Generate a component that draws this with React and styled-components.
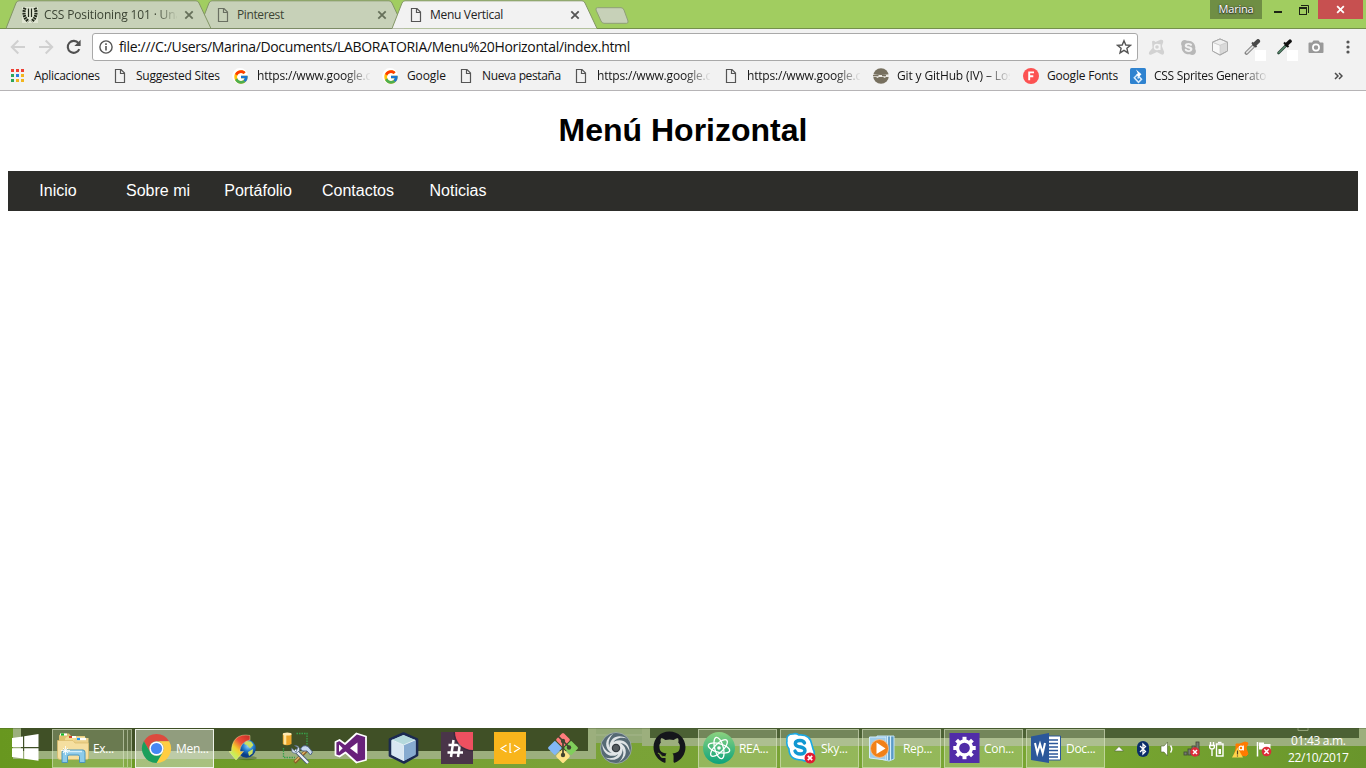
import React from 'react';
import styled, { createGlobalStyle, css } from 'styled-components';
import { FcGoogle } from 'react-icons/fc';
import { FaGithub, FaSkype } from 'react-icons/fa';

const uiFont = '"Open Sans", "Noto Sans", sans-serif';

const GlobalStyle = createGlobalStyle`
  *, *::before, *::after { box-sizing: border-box; }
  body { margin: 0; background: #fff; overflow: hidden; font-family: ${uiFont}; }
  svg { display: block; flex: none; }
`;

const Screen = styled.div`
  width: 1366px;
  height: 768px;
  display: flex;
  flex-direction: column;
  overflow: hidden;
`;

/* ---------- window title bar ---------- */

const TitleBar = styled.header`
  height: 29px;
  display: flex;
  align-items: flex-start;
  padding-left: 6px;
  background: #a1cd60;
  box-shadow: inset 0 -1px #74904b;
`;

const TabShell = styled.div`
  position: relative;
  z-index: ${p => (p.$active ? 3 : p.$layer)};
  width: 205px;
  height: 29px;
  flex: none;
  margin-right: -12px;
  padding: 1px 17px 0 16px;
  display: flex;
  align-items: center;
`;

const TabShape = styled.svg`
  position: absolute;
  inset: 0;
  z-index: -1;
`;

const TabTitle = styled.span`
  width: 133px;
  margin: 0 7px 0 6px;
  font-size: 12px;
  letter-spacing: ${p => p.$spacing || 0}px;
  line-height: 16px;
  white-space: nowrap;
  overflow: hidden;
  color: ${p => (p.$active ? '#222' : '#3c4434')};
  ${p => p.$fade && css`mask-image: linear-gradient(90deg, #000 112px, transparent 134px);`}
`;

const NewTab = styled.svg`
  margin: 7px 0 0 10px;
`;

const WindowControls = styled.div`
  display: flex;
  height: 19px;
  margin-left: auto;
  margin-right: 3px;
  align-items: stretch;
`;

const UserBadge = styled.div`
  width: 52px;
  background: #6f8e44;
  color: #fff;
  font-size: 11px;
  line-height: 18px;
  letter-spacing: -0.2px;
  text-align: center;
  text-shadow: 0 0 2px #222, 0 1px 1px #333;
`;

const CaptionButton = styled.div`
  width: ${p => p.$w}px;
  padding-right: ${p => p.$shift || 0}px;
  display: flex;
  align-items: center;
  justify-content: center;
  background: ${p => p.$bg || 'transparent'};
`;

/* ---------- toolbar ---------- */

const Toolbar = styled.div`
  height: 34px;
  display: flex;
  align-items: center;
  padding: 2px 0 0 10px;
  background: #f2f2f2;
`;

const NavButtons = styled.div`
  display: flex;
  gap: 12px;
  width: 82px;
`;

const AddressBar = styled.div`
  width: 1046px;
  flex: none;
  height: 28px;
  display: flex;
  align-items: center;
  border: 1px solid #a9a9a9;
  border-radius: 3px;
  background: #fff;
  padding: 0 5px 0 6px;
`;

const Url = styled.span`
  flex: 1;
  margin-left: 6px;
  font-size: 14px;
  line-height: 20px;
  letter-spacing: -0.345px;
  white-space: nowrap;
  color: #111;
`;

const Extensions = styled.div`
  display: flex;
  flex: none;
  padding-left: 2px;
`;

const ExtensionSlot = styled.div`
  width: 32px;
  height: 28px;
  display: flex;
  align-items: center;
  justify-content: center;
`;

/* ---------- bookmarks ---------- */

const BookmarksBar = styled.div`
  height: 28px;
  display: flex;
  padding-left: 10px;
  padding-bottom: 1px;
  background: #f2f2f2;
  border-bottom: 1px solid #b6b4b6;
`;

const BookmarkItem = styled.div`
  width: ${p => p.$w}px;
  flex: none;
  display: flex;
  align-items: center;
  gap: 8px;
`;

const BookmarkLabel = styled.span`
  width: ${p => (p.$fade ? '113px' : 'auto')};
  font-size: 12px;
  line-height: 16px;
  letter-spacing: ${p => p.$spacing || 0}px;
  white-space: nowrap;
  overflow: hidden;
  color: #151515;
  ${p => p.$fade && css`mask-image: linear-gradient(90deg, #000 88px, transparent 114px);`}
`;

const IconBox = styled.span`
  width: 16px;
  height: 16px;
  flex: none;
  display: flex;
  align-items: center;
  justify-content: center;
`;

const Overflow = styled.span`
  margin-left: auto;
  width: 32px;
  display: flex;
  align-items: center;
`;

/* ---------- page ---------- */

const Page = styled.main`
  flex: 1;
  padding: 0 8px;
  background: #fff;
  font-family: "Liberation Sans", Arial, sans-serif;
`;

const Heading = styled.h1`
  margin: 0;
  padding: 21px 0 22px;
  font-size: 32px;
  line-height: 37px;
  text-align: center;
  color: #000;
`;

const Menu = styled.nav`
  height: 40px;
  display: flex;
  background: #2d2d2a;
`;

const MenuLink = styled.a`
  width: 100px;
  font-size: 16px;
  line-height: 40px;
  text-align: center;
  color: #fff;
`;

/* ---------- taskbar ---------- */

const Taskbar = styled.footer`
  position: relative;
  z-index: 0;
  height: 40px;
  display: flex;
  align-items: stretch;
`;

const Wallpaper = styled.svg`
  position: absolute;
  inset: 0;
  z-index: -1;
`;

const StartButton = styled.div`
  width: 52px;
  padding: 6px 0 0 12px;
`;

const TaskButton = styled.div`
  width: ${p => p.$w || 79}px;
  height: 39px;
  margin: 1px ${p => p.$gap ?? 3}px 0 ${p => p.$lead || 0}px;
  padding-left: ${p => (p.$active ? 5 : 4)}px;
  padding-bottom: 1px;
  flex: none;
  display: flex;
  align-items: center;
  gap: 4px;
  border: 1px solid ${p => (p.$active ? '#eef2e8' : 'rgba(225,235,205,.55)')};
  background: ${p => (p.$active ? 'rgba(220,228,208,.52)' : 'rgba(220,235,195,.27)')};
`;

const StackEdge = styled.div`
  width: 4px;
  height: 39px;
  margin-top: 1px;
  border: 1px solid rgba(225,235,205,.5);
  border-left: 0;
  background: rgba(220,235,195,.22);
`;

const TaskLabel = styled.span`
  font-size: 12px;
  letter-spacing: -0.3px;
  color: #fff;
  white-space: nowrap;
`;

const Launchers = styled.div`
  display: flex;
  width: 480px;
  flex: none;
  margin-left: 4px;
`;

const Launcher = styled.div`
  width: 53.1px;
  flex: none;
  padding-bottom: 1px;
  display: flex;
  align-items: center;
  justify-content: center;
`;

const Tray = styled.div`
  display: flex;
  align-items: center;
  flex: none;
  margin-left: -1px;
`;

const TraySlot = styled.div`
  width: 24.2px;
  padding-top: 2px;
  display: flex;
  justify-content: center;
`;

const Clock = styled.div`
  width: 84px;
  padding-top: 4px;
  font-size: 12px;
  line-height: 17px;
  letter-spacing: -0.3px;
  text-align: center;
  color: #fff;
`;

/* ---------- small icons ---------- */

const PageIcon = ({ color = '#555' }) => (
  <svg width="16" height="16" viewBox="0 0 16 16" fill="none" stroke={color} strokeWidth="1.2">
    <path d="M3.500 1.500H9L12.500 5V14.500H3.500ZM8.500 1.800V5.500H12.300" />
  </svg>
);

const CloseX = ({ color = '#5a5a5a', size = 10, w = 1.8 }) => (
  <svg width={size} height={size} viewBox="0 0 10 10" stroke={color} strokeWidth={w}>
    <path d="M1.300 1.300 8.700 8.700M8.700 1.300 1.300 8.700" />
  </svg>
);

const Laurel = () => (
  <svg width="16" height="16" viewBox="0 0 16 16">
    <rect width="16" height="16" fill="#dfe5d2" />
    <g fill="none" stroke="#20281a">
      <path d="M3 .8C1.200 5 1.500 11 6.500 14.500M13 .8C14.800 5 14.500 11 9.500 14.500" strokeWidth="3.200" strokeDasharray="1.800 .7" />
      <path d="M6.500 1.500V10M9.500 1.500V10" strokeWidth="1.200" />
    </g>
  </svg>
);

const AppsGrid = () => (
  <svg width="14" height="14" viewBox="0 0 14 14">
    {['#ee4035', '#ee4035', '#ee4035', '#2da55a', '#2a7de1', '#f2b51d', '#2da55a', '#f2b51d', '#f2b51d'].map((c, i) => (
      <rect key={i} x={(i % 3) * 5} y={Math.floor(i / 3) * 5} width="3" height="3" fill={c} />
    ))}
  </svg>
);

const GoogleMark = () => (
  <svg width="16" height="16" viewBox="0 0 16 16">
    <circle cx="8" cy="8" r="7.900" fill="#fff" />
    <FcGoogle x="1" y="1" width="14" height="14" />
  </svg>
);

const NinjaMark = () => (
  <svg width="16" height="16" viewBox="0 0 16 16">
    <circle cx="8" cy="8" r="7.800" fill="#77705f" />
    <path d="M0 6.300Q8 7.600 16 6.300V9.100H13L11.800 10 10 9.100H6L4.500 10 3 9.100H0Z" fill="#eceae4" />
    <path d="M0 7.600H5.500M9 7.600H13" stroke="#77705f" strokeWidth="1.100" />
  </svg>
);

const FontsMark = () => (
  <svg width="16" height="16" viewBox="0 0 16 16">
    <circle cx="8" cy="8" r="8" fill="#fc5252" />
    <path d="M6.200 12.200V4.400H11M6.200 8.200H10.300" fill="none" stroke="#fff" strokeWidth="1.900" />
  </svg>
);

const SpritesMark = () => (
  <svg width="16" height="16" viewBox="0 0 16 16">
    <rect width="16" height="16" rx="1.500" fill="#2f83d0" />
    <path d="M6 1.500 11.500 6.200 8.500 9.200 6 7 7.800 5.200Z" fill="#fff" />
    <path d="M7.300 6.800 4.300 9.800 8.500 14.300 11.500 11.200 9.200 8.800 7.600 10.400" fill="none" stroke="#d9ecfd" strokeWidth="1.500" />
  </svg>
);

const Arrow = ({ flip }) => (
  <svg width="16" height="16" viewBox="0 0 16 16" fill="none" stroke="#d0d0d0" strokeWidth="2" transform={flip ? 'scale(-1 1)' : undefined}>
    <path d="M15 8H2M8.300 1.500 1.800 8 8.300 14.500" />
  </svg>
);

const Reload = () => (
  <svg width="16" height="16" viewBox="0 0 16 16">
    <path d="M13.300 10.200A6 6 0 1 1 12.500 4.200" fill="none" stroke="#505050" strokeWidth="2.100" />
    <path d="M14.600.8V7H8.400Z" fill="#505050" />
  </svg>
);

const Info = () => (
  <svg width="14" height="14" viewBox="0 0 14 14">
    <circle cx="7" cy="7" r="6.100" fill="none" stroke="#555" strokeWidth="1.400" />
    <path d="M7 6.100V10.500M7 3.300V4.900" stroke="#555" strokeWidth="1.600" />
  </svg>
);

const Star = () => (
  <svg width="16" height="16" viewBox="0 0 16 16">
    <path d="M8 1.700 9.800 6 14.500 6.300 10.900 9.300 12 13.900 8 11.400 4 13.900 5.100 9.300 1.500 6.300 6.200 6Z" fill="none" stroke="#555" strokeWidth="1.400" />
  </svg>
);

const AvastGrey = () => (
  <svg width="17" height="17" viewBox="0 0 17 17">
    <path d="M4 2.500Q5.500 1 7.500 3L12.500 .8Q15.500 0 15.300 3L13.800 7 16.200 13Q16.200 17 12.500 15L9 13 3.500 15.500Q0 16.500 1.200 13L4.500 9Z" fill="#d2d2d2" />
    <circle cx="9" cy="8" r="2.500" fill="none" stroke="#f4f4f4" strokeWidth="1.400" />
    <path d="M11.800 5.200V11" stroke="#f4f4f4" strokeWidth="1.400" />
  </svg>
);

const Cube = () => (
  <svg width="18" height="18" viewBox="0 0 18 18" stroke="#aaa" strokeLinejoin="round">
    <path d="M9 1 16.500 4.200V13L9 17 1.500 13V4.200Z" fill="#d9d9d9" />
    <path d="M1.500 4.200 9 7.200V17L1.500 13Z" fill="#f8f8f8" stroke="#c8c8c8" strokeWidth=".6" />
    <path d="M1.500 4.200 9 1 16.500 4.200 9 7.200Z" fill="#efefef" stroke="#c0c0c0" strokeWidth=".6" />
    <path d="M9 1 16.500 4.200V13L9 17 1.500 13V4.200Z" fill="none" />
  </svg>
);

const DropperSvg = styled.svg`
  margin: 6px 0 0 6px;
`;

const Dropper = ({ tip = '#e2e2e2', edge = '#808080', cap = '#484848', slim }) => (
  <DropperSvg width="22" height="22" viewBox="0 0 22 22">
    <rect x="11" y="11" width="11" height="11" fill="#fff" />
    <path d="M2.500 14 10 6.500" stroke={edge} strokeWidth={slim ? 2.6 : 3.8} strokeLinecap="round" />
    <path d="M2.800 13.700 9.700 6.800" stroke={tip} strokeWidth={slim ? 1 : 1.9} strokeLinecap="round" />
    <path d="M8 3.500 12.500 8" stroke={cap} strokeWidth="2" />
    <path d="M10.500 5.500 14 2.200" stroke={cap} strokeWidth={slim ? 3.600 : 4.200} strokeLinecap="round" />
  </DropperSvg>
);

const Camera = () => (
  <svg width="16" height="14" viewBox="0 0 16 14">
    <path d="M1.500 2.500H4L5.500.5H10.500L12 2.500H14.500Q15.500 2.500 15.500 3.500V12Q15.500 13 14.500 13H1.500Q.5 13 .5 12V3.500Q.5 2.500 1.500 2.500Z" fill="#999" />
    <circle cx="8" cy="7.500" r="3.100" fill="none" stroke="#fff" strokeWidth="1.700" />
  </svg>
);

const Dots = () => (
  <svg width="4" height="14" viewBox="0 0 4 14" fill="#555">
    <circle cx="2" cy="2" r="1.600" /><circle cx="2" cy="7" r="1.600" /><circle cx="2" cy="12" r="1.600" />
  </svg>
);

/* ---------- taskbar icons ---------- */

const WindowsLogo = () => (
  <svg width="27" height="27" viewBox="0 0 27 27" fill="#fff">
    <path d="M0 4 11 2.400V13H0ZM12.200 2.200 26.500 0V13H12.200ZM0 14.200H11V24.500L0 23ZM12.200 14.200H26.500V26.700L12.200 24.700Z" />
  </svg>
);

const Folder = () => (
  <svg width="32" height="32" viewBox="0 0 32 32">
    <path d="M2 3.500 4 1.500H12L14 4H28V14H2Z" fill="#dfc06d" />
    <path d="M3 2.500H10" stroke="#fff" strokeWidth="2" /><path d="M4 2.500H7" stroke="#12b925" strokeWidth="2.200" />
    <path d="M8 6.500 10 4.500H28V12H8Z" fill="#f3dc92" /><path d="M12 5H19" stroke="#fff" strokeWidth="2" /><path d="M12 5H15" stroke="#d2432b" strokeWidth="2" />
    <path d="M17 8 19 6H31.500V24H17Z" fill="#ecd28b" /><path d="M20 7H29" stroke="#fff" strokeWidth="2.400" /><path d="M20 7H23" stroke="#2196f3" strokeWidth="2.200" />
    <path d="M.5 8.500H16L18 11H31.500V26.500Q31 27.500 29 27.500H3Q.5 27.500 .5 25Z" fill="#f5dfa0" stroke="#d8b967" strokeWidth=".7" />
    <path d="M5 30.500V20.500Q5 18 7 18H26Q28 18 28 20.500V30.500H22.500V24.500Q22.500 23 21 23H12Q10.500 23 10.500 24.500V30.500Z" fill="#8dcbea" stroke="#4a95bd" />
    <path d="M6.500 20.500Q6.500 19.500 8 19.500H25" stroke="#d5f0fb" strokeWidth="1.500" fill="none" />
    <path d="M8.500 14V23M4 18.500H13M6 16 11 21M11 16 6 21" stroke="#fff" strokeWidth=".8" />
  </svg>
);

const Chrome = () => (
  <svg width="31" height="31" viewBox="0 0 32 32">
    <path d="M3 8.500A15 15 0 0 1 29 8.500H16A7.500 7.500 0 0 0 9.500 19.750Z" fill="#dd4b3e" />
    <path d="M29 8.500A15 15 0 0 1 16 31L22.500 19.750A7.500 7.500 0 0 0 16 8.500Z" fill="#ffcd42" />
    <path d="M16 31A15 15 0 0 1 3 8.500L9.500 19.750A7.500 7.500 0 0 0 22.500 19.750Z" fill="#1a9f5c" />
    <circle cx="16" cy="16" r="7.300" fill="#fff" /><circle cx="16" cy="16" r="5.800" fill="#4587f3" />
  </svg>
);

const DownloadGlobe = () => (
  <svg width="31" height="27" viewBox="0 0 31 27">
    <defs>
      <linearGradient id="sweep" x1="1" y1="0" x2=".2" y2="1">
        <stop offset="0" stopColor="#c92a25" /><stop offset=".4" stopColor="#ee5038" /><stop offset=".65" stopColor="#f5cf2c" /><stop offset=".85" stopColor="#c8ee5c" />
      </linearGradient>
      <radialGradient id="globe" cx=".6" cy=".35"><stop offset="0" stopColor="#a5dbff" /><stop offset=".55" stopColor="#2580cf" /><stop offset="1" stopColor="#0b3e88" /></radialGradient>
    </defs>
    <ellipse cx="18" cy="24" rx="10" ry="2.200" fill="#304b16" opacity=".4" />
    <circle cx="17.500" cy="14.500" r="9.300" fill="url(#globe)" />
    <path d="M17 7 22 7.500 24.500 11 21 14.500 18 11 15 10ZM19 18 24 15 23.500 19.500 20 22Z" fill="#c9df62" />
    <path d="M21 1.500C9 -1 2.500 6 2.500 17.500H0L7 26 14.500 17.500H11C11 12 14 7.500 21 6Z" fill="url(#sweep)" stroke="#fff6b0" strokeWidth=".4" />
  </svg>
);

const DatabaseTools = () => (
  <svg width="32" height="32" viewBox="0 0 32 32">
    <path d="M14.500 1.500H25V13M1.500 16V25.500H13" fill="none" stroke="#37a04a" strokeWidth="1.300" strokeDasharray="1.500 1" />
    <path d="M.8 2V12Q5 14.500 9.500 12V2Z" fill="#eca528" /><path d="M3 2V12.500" stroke="#ffe59c" strokeWidth="2.600" /><ellipse cx="5.200" cy="2" rx="4.400" ry="1.500" fill="#ffeab2" />
    <path d="M12.500 30.500 24.500 18.500" stroke="#8b5d26" strokeWidth="3.300" /><path d="M13 29.500 24 18.500" stroke="#e3b86b" strokeWidth="1.400" />
    <path d="M18.500 17Q21 12 26 14.500L30.500 20 28.500 23 25 19 20.500 19Z" fill="#c9d9ee" stroke="#4f6484" />
    <path d="M13 18 26 31" stroke="#4b5e78" strokeWidth="4" /><path d="M13 18 26 31" stroke="#eef3fa" strokeWidth="2.300" />
    <path d="M9.500 16 14 20 15.800 15.500 12.500 13.500Q18 13.500 17.500 18.500 14 23 10 20Z" fill="#dde8f5" stroke="#4c617e" strokeWidth=".7" />
  </svg>
);

const VisualStudio = () => (
  <svg width="33" height="32" viewBox="0 0 33 32">
    <path d="M1.500 10 5.500 8 11 12 22.500 1.500 32 4.500V28L22.500 30.500 11.500 20.500 5.500 24.500 1.500 23Z" fill="#68217a" stroke="#fff" strokeWidth="1.800" strokeLinejoin="round" />
    <path d="M5 12.500 8.700 16.300 5 20ZM23.500 10.500V22L16 16.300Z" fill="#fff" />
  </svg>
);

const NetBeans = () => (
  <svg width="31" height="32" viewBox="0 0 31 32" strokeLinejoin="round">
    <path d="M15.500 1.500 29 7.500V23L16 30.500 2 23.500V7.500Z" fill="#a6c2d7" stroke="#1b2a51" strokeWidth="2.700" />
    <path d="M3.500 8 15.500 13V29L3.500 23Z" fill="#d8e7f2" /><path d="M15.500 13 27.500 8V23L15.500 29Z" fill="#86abd0" />
    <path d="M3.500 8 15.500 3 27.500 8 15.500 13Z" fill="#b4d9dc" /><path d="M15.500 13.500V29M4 8 15.500 13 27 8" fill="none" stroke="#edf6fb" strokeWidth=".8" />
  </svg>
);

const SlackTile = () => (
  <svg width="32" height="32" viewBox="0 0 32 32">
    <rect width="32" height="32" fill="#4a3549" />
    <path d="M12.500 8 10 25M19.500 8 17 25" stroke="#fff" strokeWidth="2.500" />
    <path d="M7.500 13H23M6.500 20.500H22" stroke="#fff" strokeWidth="2.500" />
    <path d="M12.500 0H32V19.500C20.500 19.500 12.500 11 12.500 0Z" fill="#35263a" opacity=".7" />
    <path d="M14 0H32V18C21.500 18 14 10 14 0Z" fill="#ee5060" />
  </svg>
);

const BracketsTile = () => (
  <svg width="32" height="32" viewBox="0 0 32 32" fill="none" stroke="#fff" strokeWidth="1.200">
    <rect width="32" height="32" fill="#f8b51c" stroke="none" />
    <path d="M12.500 13 7 16.500 12.500 20M20 13 25.500 16.500 20 20M16 11V20.500H17.500" />
  </svg>
);

const GitMark = () => (
  <svg width="32" height="32" viewBox="0 0 32 32">
    <g transform="rotate(45 16 16)">
      <rect x="5" y="5" width="10.500" height="10.500" rx="1.500" fill="#ff7d7d" />
      <rect x="16.500" y="5" width="10.500" height="10.500" rx="1.500" fill="#80cf5b" />
      <rect x="5" y="16.500" width="10.500" height="10.500" rx="1.500" fill="#82b7f7" />
      <rect x="16.500" y="16.500" width="10.500" height="10.500" rx="1.500" fill="#fde487" />
    </g>
    <path d="M11 4 16 9V23M16 9 22 15" fill="none" stroke="#41452f" strokeWidth="1.700" />
    <g fill="#41452f"><circle cx="16" cy="9" r="2.200" /><circle cx="22" cy="15.500" r="2.200" /><circle cx="16" cy="23" r="2.200" /></g>
  </svg>
);

const Swirl = () => (
  <svg width="32" height="32" viewBox="0 0 32 32">
    <circle cx="16" cy="16" r="15.500" fill="#566a74" stroke="#aeb9bc" strokeWidth=".7" />
    {[0, 60, 120, 180, 240, 300].map(a => (
      <path key={a} d="M9.500 14C10 6 18 1 27 6.500C20 4.500 14 7 13 12Z" fill="#dfe4e6" transform={`rotate(${a} 16 16)`} />
    ))}
    <circle cx="16" cy="16" r="5.500" fill="#343b40" stroke="#e3e7e9" strokeWidth="2.500" /><circle cx="16" cy="16" r="3" fill="#555c60" />
  </svg>
);

const AtomMark = () => (
  <svg width="32" height="32" viewBox="0 0 32 32">
    <defs><linearGradient id="atom" x2="0" y2="1"><stop stopColor="#8bd27f" /><stop offset="1" stopColor="#0ba37c" /></linearGradient></defs>
    <circle cx="16" cy="16" r="16" fill="url(#atom)" />
    <g fill="none" stroke="#fff" strokeWidth="1.300">
      {[15, 75, 135].map(a => <ellipse key={a} cx="16" cy="16" rx="11" ry="4.300" transform={`rotate(${a} 16 16)`} />)}
    </g>
    <circle cx="16" cy="16" r="1.800" fill="#fff" />
  </svg>
);

const SkypeMark = () => (
  <svg width="32" height="32" viewBox="0 0 32 32">
    <path d="M2 9Q1 2 8 2 11 1 14 3 25 2 27 13L28 17Q31 22 27 26 23 31 17 28 4 28 4 17 1 13 2 9Z" fill="#fff" stroke="#1ba9e4" strokeWidth="1.600" />
    <path d="M19.500 11Q18.500 8.500 15 8.500 10.500 8.500 10.300 11.500 10.300 14 14.500 14.800 20 15.700 20 18.700 19.500 22 15.500 22 11 22 10 19" fill="none" stroke="#1097d2" strokeWidth="3.400" strokeLinecap="round" />
    <circle cx="25" cy="26" r="5.500" fill="#e01b32" /><path d="M22.800 23.800 27.200 28.200M27.200 23.800 22.800 28.200" stroke="#fff" strokeWidth="1.700" />
  </svg>
);

const MediaPlayer = () => (
  <svg width="32" height="32" viewBox="0 0 32 32">
    <path d="M10 4 27 4V27L22 29 9 26Z" fill="#5c9bc7" stroke="#c1e3f7" />
    <path d="M20.500 4V28M23.500 4V28" stroke="#d3edfb" strokeWidth="1.200" />
    <path d="M2.500 5H19V28L2.500 26Z" fill="#9ecceb" stroke="#d3ecfb" /><circle cx="12.500" cy="16.500" r="9" fill="#f18118" stroke="#f8c28b" strokeWidth=".8" />
    <path d="M9.500 10.500V22L18.500 16.500Z" fill="#fff" />
  </svg>
);

const SettingsTile = () => (
  <svg width="31" height="30" viewBox="0 0 30 30">
    <rect width="30" height="30" fill="#512da8" />
    <circle cx="15" cy="15" r="7" fill="none" stroke="#fff" strokeWidth="3.300" />
    {[0, 45, 90, 135, 180, 225, 270, 315].map(a => <rect key={a} x="13" y="3.800" width="4" height="5" fill="#fff" transform={`rotate(${a} 15 15)`} />)}
  </svg>
);

const WordMark = () => (
  <svg width="31" height="30" viewBox="0 0 31 30">
    <path d="M15 3H29.500V27H15Z" fill="#fff" stroke="#2b579a" />
    <path d="M18 7H27M18 10.500H27M18 14H27M18 17.500H27M18 21H27M18 24H27" stroke="#2b579a" strokeWidth="1.300" />
    <path d="M0 3.500 18 0V30L0 27Z" fill="#2b579a" />
    <path d="M4 10 6.300 20 9 11 11.700 20 14 10" fill="none" stroke="#fff" strokeWidth="2" />
  </svg>
);

/* ---------- tray icons ---------- */

const TrayArrow = () => <svg width="10" height="6" viewBox="0 0 10 6"><path d="M.5 5 5 .5 9.500 5Z" fill="#fff" stroke="#50613c" strokeWidth=".6" /></svg>;

const Bluetooth = () => (
  <svg width="12" height="16" viewBox="0 0 12 16"><rect width="12" height="16" rx="6" fill="#0a2d69" />
    <path d="M3 5 8.500 10.500 6 13V3L8.500 5.500 3 11" fill="none" stroke="#fff" strokeWidth="1.300" /></svg>
);

const Volume = () => (
  <svg width="14" height="16" viewBox="0 0 14 16"><path d="M1 5H4L7.500 1V15L4 11H1Z" fill="#fff" stroke="#526436" strokeWidth=".6" />
    <path d="M10.500 4.500Q13 8 10.500 11.500" fill="none" stroke="#fff" strokeWidth="1.400" /></svg>
);

const Signal = () => (
  <svg width="17" height="16" viewBox="0 0 17 16"><g fill="#777c70" stroke="#3f4737" strokeWidth=".8"><rect x="1" y="11" width="3" height="3" /><rect x="5" y="8" width="3" height="6" /><rect x="9" y="5" width="3" height="9" /><rect x="13" y="1" width="3" height="13" /></g>
    <circle cx="12" cy="11" r="4.700" fill="#dc2c38" /><path d="M10 9 14 13M14 9 10 13" stroke="#fff" strokeWidth="1.500" /></svg>
);

const Battery = () => (
  <svg width="16" height="16" viewBox="0 0 16 16" fill="none" stroke="#fff" strokeWidth="1.400"><path d="M2.500 1V4M5.500 1V4M1 4.500H7M1.700 4.500V6.500Q2 8 4 8 6 8 6.300 6.500V4.500M4 8V15" /><rect x="8.500" y="3" width="6.500" height="12" /><path d="M10 1.500H13.500" /><rect x="10.500" y="8" width="2.500" height="5" fill="#fff" stroke="none" /></svg>
);

const AvastTray = () => (
  <svg width="17" height="17" viewBox="0 0 17 17"><path d="M4 3 8 3 13 1 16 2 14 7 16 13 14 15 9 14 2 15 4 8Z" fill="#ff7a00" stroke="#ff7a00" strokeLinejoin="round" />
    <circle cx="9" cy="7" r="1.900" fill="none" stroke="#fff" strokeWidth="1.200" /><path d="M11.300 4.500V9.500" stroke="#fff" strokeWidth="1.200" /><path d="M5.500 6.500 11 16.500H0Z" fill="#ffd44c" /><path d="M5.500 9.500V13.500M5.500 14.500V15.500" stroke="#544326" strokeWidth="1.200" /></svg>
);

const Flag = () => (
  <svg width="16" height="16" viewBox="0 0 16 16"><path d="M1.500 1V15.500" stroke="#fff" strokeWidth="1.500" /><path d="M3 1.500H8V3H14.500V10H8V8.500H3Z" fill="#fff" /><circle cx="10.500" cy="10.500" r="4.800" fill="#dc2c38" /><path d="M8.300 8.300 12.700 12.700M12.700 8.300 8.300 12.700" stroke="#fff" strokeWidth="1.500" /></svg>
);

/* ---------- content ---------- */

const tabs = [
  { title: 'CSS Positioning 101 · Una', icon: <Laurel />, fade: true, spacing: -0.15 },
  { title: 'Pinterest', icon: <PageIcon color="#6a7062" />, spacing: -0.38 },
  { title: 'Menu Vertical', icon: <PageIcon />, active: true, spacing: -0.3 },
];

const bookmarks = [
  { w: 102, label: 'Aplicaciones', icon: <AppsGrid />, spacing: -0.3 },
  { w: 120, label: 'Suggested Sites', icon: <PageIcon />, spacing: -0.23 },
  { w: 150, label: 'https://www.google.com', icon: <GoogleMark />, fade: true, spacing: -0.2, gap: 9 },
  { w: 76, label: 'Google', icon: <GoogleMark />, spacing: -0.1, gap: 9 },
  { w: 115, label: 'Nueva pestaña', icon: <PageIcon />, spacing: -0.38 },
  { w: 150, label: 'https://www.google.com', icon: <PageIcon />, fade: true, spacing: -0.2 },
  { w: 150, label: 'https://www.google.com', icon: <PageIcon />, fade: true, spacing: -0.2 },
  { w: 150, label: 'Git y GitHub (IV) – Los', icon: <NinjaMark />, fade: true, spacing: -0.15 },
  { w: 107, label: 'Google Fonts', icon: <FontsMark />, spacing: -0.2 },
  { w: 150, label: 'CSS Sprites Generator', icon: <SpritesMark />, fade: true, spacing: -0.3 },
];

const WideGapItem = styled(BookmarkItem)`
  gap: 9px;
`;

const extensions = [
  <AvastGrey />, <FaSkype size={17} color="#b8b8b8" />, <Cube />, <Dropper />,
  <Dropper slim tip="#78b593" edge="#2c4a3a" cap="#111" />, <Camera />, <Dots />,
];

const launchers = [
  <DownloadGlobe />, <DatabaseTools />, <VisualStudio />, <NetBeans />, <SlackTile />,
  <BracketsTile />, <GitMark />, <Swirl />, <FaGithub size={33} color="#15161b" />,
];

const windows = [
  ['REA...', <AtomMark />], ['Sky...', <SkypeMark />], ['Rep...', <MediaPlayer />],
  ['Con...', <SettingsTile />], ['Doc...', <WordMark />],
];

const trayIcons = [<TrayArrow />, <Bluetooth />, <Volume />, <Signal />, <Battery />, <AvastTray />, <Flag />];

function Tab({ tab, layer }) {
  return (
    <TabShell $active={tab.active} $layer={layer}>
      <TabShape width="205" height="29" viewBox="0 0 205 29">
        <path d="M0 28.500 10 3Q11 .8 13 .8H190Q192 .8 193 3L205 28.500Z" fill={tab.active ? '#f2f2f2' : '#c7d1b8'} />
        <path d="M0 28.500 10 3Q11 .8 13 .8H190Q192 .8 193 3L205 28.500" fill="none" stroke="#829565" />
        {!tab.active && <path d="M0 28.500H205" stroke="#7c8b66" />}
      </TabShape>
      {tab.icon}
      <TabTitle $active={tab.active} $fade={tab.fade} $spacing={tab.spacing}>{tab.title}</TabTitle>
      <CloseX color={tab.active ? '#555' : '#66705a'} />
    </TabShell>
  );
}

function Bookmark({ item }) {
  const Item = item.gap ? WideGapItem : BookmarkItem;
  return (
    <Item $w={item.w}>
      <IconBox>{item.icon}</IconBox>
      <BookmarkLabel $fade={item.fade} $spacing={item.spacing}>{item.label}</BookmarkLabel>
    </Item>
  );
}

export default function App() {
  return (
    <>
      <GlobalStyle />
      <Screen>
        <TitleBar>
          {tabs.map((t, i) => <Tab key={t.title} tab={t} layer={2 - i} />)}
          <NewTab width="34" height="17" viewBox="0 0 34 17">
            <path d="M2.500 .7H26Q28 .7 29 3L33 14Q33.500 16.300 31.500 16.300H9Q7 16.300 6 14L1 3Q.5 .7 2.500 .7Z" fill="#c7d1b8" stroke="#8f9f77" />
          </NewTab>
          <WindowControls>
            <UserBadge>Marina</UserBadge>
            <CaptionButton $w={31}>
              <svg width="8" height="6" viewBox="0 0 8 6"><rect y="4" width="8" height="2" fill="#1d2414" /></svg>
            </CaptionButton>
            <CaptionButton $w={25} $shift={3}>
              <svg width="10" height="10" viewBox="0 0 10 10" fill="none" stroke="#1d2414"><path d="M2 .5H9.500V8" /><rect x=".5" y="2.500" width="7" height="7" /><path d="M0 3H8" strokeWidth="2" /></svg>
            </CaptionButton>
            <CaptionButton $w={45} $bg="#c75050"><CloseX color="#fff" size={9} w={2} /></CaptionButton>
          </WindowControls>
        </TitleBar>

        <Toolbar>
          <NavButtons><Arrow /><Arrow flip /><Reload /></NavButtons>
          <AddressBar>
            <Info />
            <Url>file:///C:/Users/Marina/Documents/LABORATORIA/Menu%20Horizontal/index.html</Url>
            <Star />
          </AddressBar>
          <Extensions>
            {extensions.map((icon, i) => <ExtensionSlot key={i}>{icon}</ExtensionSlot>)}
          </Extensions>
        </Toolbar>

        <BookmarksBar>
          {bookmarks.map((b, i) => <Bookmark key={i} item={b} />)}
          <Overflow>
            <svg width="9" height="8" viewBox="0 0 9 8" fill="none" stroke="#4c4c4c" strokeWidth="1.500"><path d="M1 1 4 4 1 7M5 1 8 4 5 7" /></svg>
          </Overflow>
        </BookmarksBar>

        <Page>
          <Heading>Menú Horizontal</Heading>
          <Menu>
            {['Inicio', 'Sobre mi', 'Portáfolio', 'Contactos', 'Noticias'].map(m => <MenuLink key={m}>{m}</MenuLink>)}
          </Menu>
        </Page>

        <Taskbar>
          <Wallpaper width="1366" height="40" viewBox="0 0 1366 40">
            <defs>
              <linearGradient id="lime"><stop stopColor="#68971f" /><stop offset=".4" stopColor="#7aa238" /><stop offset=".8" stopColor="#78a631" /><stop offset="1" stopColor="#69952b" /></linearGradient>
            </defs>
            <rect width="1366" height="40" fill="url(#lime)" />
            <path d="M13 0H596V31H13Z" fill="#9caf7d" />
            <path d="M21 0H588V23H21Z" fill="#405026" />
            <path d="M596 0H642V15H596Z" fill="#93a976" /><path d="M596 7H642" stroke="#a5b68b" />
            <path d="M642 0H1366V18H642Z" fill="#9caf7d" />
            <path d="M650 0H1359V10H650Z" fill="#4c6134" />
            <path d="M1298 0V2.500H1308V0" fill="none" stroke="#91a279" />
            <path d="M0 .5H1366" stroke="#3b4d24" opacity=".3" />
          </Wallpaper>
          <StartButton><WindowsLogo /></StartButton>
          <TaskButton $w={72} $gap={0}><Folder /><TaskLabel>Ex...</TaskLabel></TaskButton>
          <StackEdge /><StackEdge />
          <TaskButton $active $gap={0} $lead={3}><Chrome /><TaskLabel>Men...</TaskLabel></TaskButton>
          <Launchers>
            {launchers.map((icon, i) => <Launcher key={i}>{icon}</Launcher>)}
          </Launchers>
          {windows.map(([label, icon]) => (
            <TaskButton key={label}>{icon}<TaskLabel>{label}</TaskLabel></TaskButton>
          ))}
          <Tray>
            {trayIcons.map((icon, i) => <TraySlot key={i}>{icon}</TraySlot>)}
          </Tray>
          <Clock>01:43 a.m.<br />22/10/2017</Clock>
        </Taskbar>
      </Screen>
    </>
  );
}
